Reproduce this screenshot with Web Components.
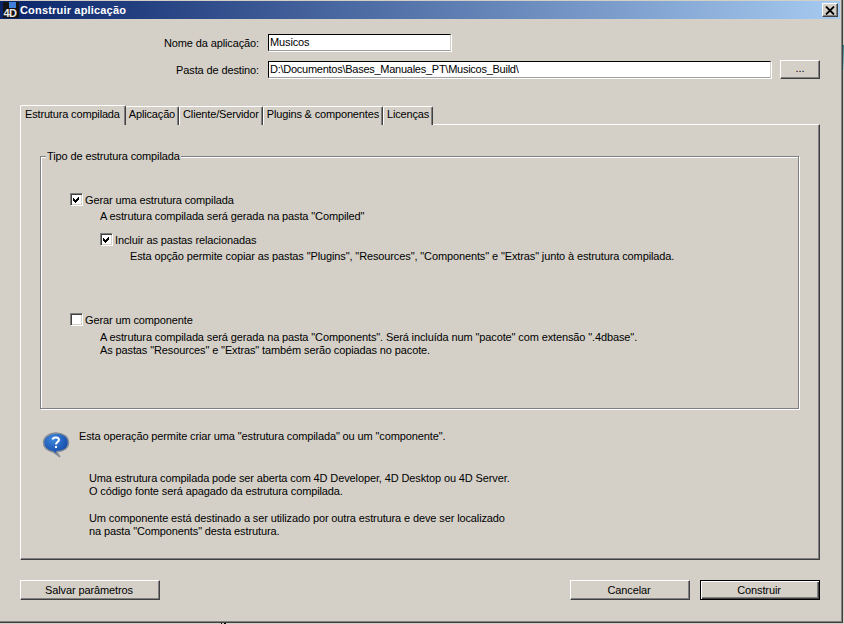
<!doctype html>
<html>
<head>
<meta charset="utf-8">
<style>
  html, body { margin: 0; padding: 0; }
  html {
    background-color: #d4d0c8;
    background-image: linear-gradient(#2f7f86, #a9cfcf), linear-gradient(#000, #000), linear-gradient(#000, #000);
    background-repeat: no-repeat;
    background-size: 1px 25px, 1px 1px, 2px 1px;
    background-position: 843px 45px, 221px 623px, 224px 623px;
  }
  body { font: 11px "Liberation Sans", Arial, sans-serif; letter-spacing: -0.12px; color: #000; }
</style>
</head>
<body>
<template id="btn-tpl">
  <style>
    :host { display: block; box-sizing: border-box; height: 20px; padding-right: 2px; background: #d4d0c8; border: 1px solid; border-color: #fff #404040 #404040 #fff; box-shadow: inset -1px -1px 0 #808080; text-align: center; line-height: 18px; font-size: 11px; }
    :host([default]) { border: 1px solid #000; box-shadow: inset 1px 1px 0 #fff, inset -1px -1px 0 #404040, inset -2px -2px 0 #808080; }
  </style>
  <slot></slot>
</template>

<template id="field-tpl">
  <style>
    :host { display: grid; grid-template-columns: 239px 1fr; column-gap: 9px; align-items: center; height: 17px; }
    .label { text-align: right; }
    .box { box-sizing: border-box; height: 17px; background: #fff; border: 1px solid; border-color: #000 #d4d0c8 #a0a0a0 #000; padding-left: 1px; line-height: 15px; white-space: nowrap; overflow: hidden; box-shadow: 1px 1px 0 #fff; }
  </style>
  <div class="label"><slot name="label"></slot></div>
  <div class="box" part="box"><slot></slot></div>
</template>

<template id="tabs-tpl">
  <style>
    :host { display: flex; align-items: flex-end; height: 21px; padding-left: 2px; box-sizing: border-box; margin-bottom: -1px; position: relative; z-index: 1; letter-spacing: -0.16px; }
  </style>
  <slot></slot>
</template>

<template id="tab-tpl">
  <style>
    :host { display: block; box-sizing: border-box; height: 19px; line-height: 14px; padding: 0 3px; background: #d4d0c8; border-top: 1px solid #fff; border-left: 1px solid #fff; border-right: 1px solid #404040; box-shadow: inset -1px 0 0 #808080; border-radius: 2px 2px 0 0; white-space: nowrap; }
    :host([active]) { height: 20px; line-height: 17px; padding: 0 5px 0 4px; margin-left: -2px; margin-right: -1px; position: relative; z-index: 2; }
  </style>
  <slot></slot>
</template>

<template id="check-tpl">
  <style>
    :host { display: flex; align-items: center; gap: 2px; height: 13px; }
    .box { box-sizing: border-box; width: 13px; height: 13px; background: #fff; border: 1px solid; border-color: #808080 #fff #fff #808080; box-shadow: inset 1px 1px 0 #404040, inset -1px -1px 0 #d4d0c8; flex: none; display: flex; }
    svg { display: block; margin: 1px; }
    :host(:not([checked])) svg { display: none; }
  </style>
  <div class="box"><svg width="9" height="9" viewBox="0 0 9 9"><path d="M1 3h1v1h1v1h1v-1h1v-1h1v-1h1v3h-1v1h-1v1h-1v1h-1v-1h-1v-1h-1z" fill="#000"/></svg></div>
  <div><slot></slot></div>
</template>

<template id="window-tpl">
  <style>
    :host { display: block; box-sizing: border-box; width: 843px; height: 623px; padding-top: 1px; overflow: hidden; border-right: 1px solid #404040; border-bottom: 1px solid #404040; box-shadow: inset -1px -1px 0 #808080; background: #d4d0c8; }
    .title { display: flex; align-items: center; height: 18px; margin-right: 2px; background: linear-gradient(90deg, #0a246a, #a6caf0); color: #fff; font-weight: bold; font-size: 11px; letter-spacing: 0.18px; gap: 1px; padding: 0 0 0 3px; }
    .title span { flex: 1; }
    .close { box-sizing: border-box; width: 16px; height: 14px; background: #d4d0c8; border: 1px solid; border-color: #fff #404040 #404040 #fff; box-shadow: inset -1px -1px 0 #808080; display: flex; align-items: center; justify-content: center; margin-right: 2px; }
    .body { padding: 15px 22px 0 20px; }
  </style>
  <div class="title">
    <svg width="16" height="16" viewBox="0 0 16 16">
      <rect width="16" height="16" fill="#141414"/>
      <rect x="6" y="0" width="7" height="6" fill="#3f7fd8"/>
      <text x="0.500" y="14.500" font-family="Liberation Sans" font-weight="bold" font-size="11" letter-spacing="-0.5" fill="#e8e8e8">4D</text>
    </svg>
    <span><slot name="title"></slot></span>
    <div class="close"><svg width="10" height="9" viewBox="0 0 10 9"><path d="M1 0.500L9 8.500M9 0.500L1 8.500" stroke="#000" stroke-width="1.800" fill="none"/></svg></div>
  </div>
  <div class="body"><slot></slot></div>
</template>

<template id="group-tpl">
  <style>
    :host { display: block; box-sizing: border-box; height: 253px; border: 1px solid #808080; box-shadow: inset 1px 1px 0 #fff, 1px 1px 0 #fff; padding: 36px 0 0 29px; position: relative; }
    .legend { position: absolute; left: 5px; top: -7px; background: #d4d0c8; padding: 0 1px; line-height: 13px; }
  </style>
  <div class="legend"><slot name="legend"></slot></div>
  <slot></slot>
</template>

<script>
  function define(tag, tplId) {
    customElements.define(tag, class extends HTMLElement {
      constructor() {
        super()
        this.attachShadow({ mode: 'open' }).appendChild(document.getElementById(tplId).content.cloneNode(true))
      }
    })
  }
  define('x-btn', 'btn-tpl')
  define('x-field', 'field-tpl')
  define('x-tabs', 'tabs-tpl')
  define('x-tab', 'tab-tpl')
  define('x-check', 'check-tpl')
  define('x-window', 'window-tpl')
  define('x-group', 'group-tpl')
</script>

<x-window>
  <span slot="title">Construir aplicação</span>
  <style>
    .t { line-height: 13px; }
  </style>
  <x-field style="width:431px"><span slot="label">Nome da aplicação:</span>Musicos</x-field>
  <div style="display:flex;gap:9px;margin-top:9px;align-items:center">
    <x-field style="width:751px"><span slot="label">Pasta de destino:</span><span style="letter-spacing:-0.26px">D:\Documentos\Bases_Manuales_PT\Musicos_Build\</span></x-field>
    <x-btn style="width:40px;height:19px;line-height:15px;padding-right:0">...</x-btn>
  </div>
  <x-tabs style="margin-top:25px">
    <x-tab active>Estrutura compilada</x-tab>
    <x-tab>Aplicação</x-tab>
    <x-tab>Cliente/Servidor</x-tab>
    <x-tab>Plugins &amp; componentes</x-tab>
    <x-tab>Licenças</x-tab>
  </x-tabs>
  <div style="box-sizing:border-box;height:436px;border:1px solid;border-color:#fff #404040 #404040 #fff;box-shadow:inset -1px -1px 0 #808080;padding:31px 20px 0 19px">
    <x-group>
      <span slot="legend">Tipo de estrutura compilada</span>
      <x-check checked>Gerar uma estrutura compilada</x-check>
      <div class="t" style="margin:4px 0 0 30px">A estrutura compilada será gerada na pasta "Compiled"</div>
      <x-check checked style="margin:10px 0 0 30px">Incluir as pastas relacionadas</x-check>
      <div class="t" style="margin:4px 0 0 60px">Esta opção permite copiar as pastas "Plugins", "Resources", "Components" e "Extras" junto à estrutura compilada.</div>
      <x-check style="margin-top:50px">Gerar um componente</x-check>
      <div class="t" style="margin:5px 0 0 30px">A estrutura compilada será gerada na pasta "Components". Será incluída num "pacote" com extensão ".4dbase".<br>As pastas "Resources" e "Extras" também serão copiadas no pacote.</div>
    </x-group>
    <div style="display:flex;margin:21px 0 0 2px">
      <svg width="28" height="28" viewBox="0 0 28 28" style="flex:none;margin-top:2px">
        <defs><radialGradient id="q" cx=".4" cy=".25" r=".8"><stop offset="0" stop-color="#3f8ae0"/><stop offset="1" stop-color="#0a3a9a"/></radialGradient></defs>
        <path d="M14 1C21 1 26.500 4.500 26.500 10.500S21 19.500 16 19.500c-1.500 0-1.500 .5-1 1l3 4.500-7-5C5 18.500 1.500 15.500 1.500 10.500S7 1 14 1z" fill="url(#q)" stroke="#8a9098" stroke-width="1.500"/>
        <path d="M10.500 7.500c.5-2.500 6-3 6.500 0 .3 2.500-3 2.500-3 5" fill="none" stroke="#fff" stroke-width="2"/><rect x="13" y="14" width="2" height="2" fill="#fff"/>
      </svg>
      <div style="margin-left:9px">
        <div class="t">Esta operação permite criar uma "estrutura compilada" ou um "componente".</div>
        <div class="t" style="margin:29px 0 0 10px">Uma estrutura compilada pode ser aberta com 4D Developer, 4D Desktop ou 4D Server.<br>O código fonte será apagado da estrutura compilada.</div>
        <div class="t" style="margin:14px 0 0 10px">Um componente está destinado a ser utilizado por outra estrutura e deve ser localizado<br>na pasta "Components" desta estrutura.</div>
      </div>
    </div>
  </div>
  <div style="display:flex;margin-top:20px;gap:10px">
    <x-btn style="width:140px;margin-right:auto">Salvar parâmetros</x-btn>
    <x-btn style="width:120px">Cancelar</x-btn>
    <x-btn default style="width:120px">Construir</x-btn>
  </div>
</x-window>
</body>
</html>
